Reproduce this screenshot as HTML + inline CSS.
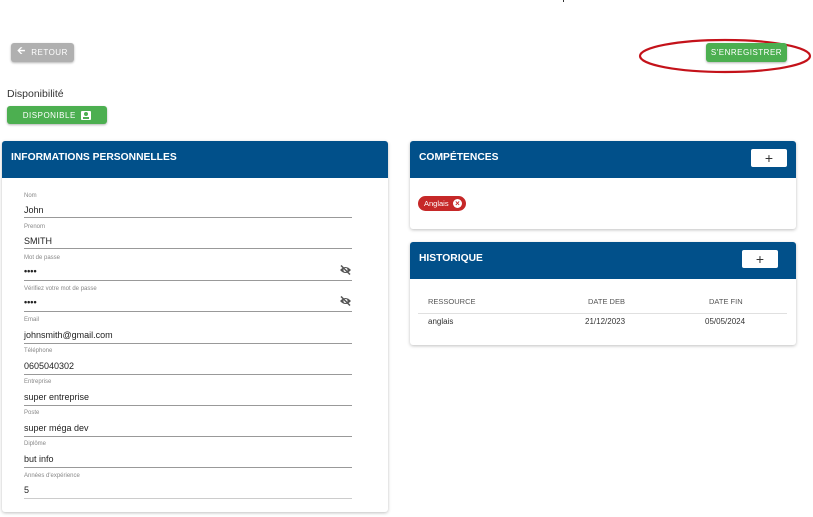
<!DOCTYPE html>
<html><head><meta charset="utf-8"><style>
*{margin:0;padding:0;box-sizing:border-box}
body{width:813px;height:517px;background:#fff;font-family:"Liberation Sans",sans-serif;position:relative;overflow:hidden;color:#222;white-space:nowrap}
.a{position:absolute}
.btn{position:absolute;border-radius:3px;color:#fff;font-size:8px;letter-spacing:.5px;display:flex;align-items:center;justify-content:center;box-shadow:0 1px 2px rgba(0,0,0,.3)}
.card{position:absolute;background:#fff;border-radius:3px;box-shadow:0 1px 3px rgba(0,0,0,.25)}
.hd{position:absolute;left:0;right:0;top:0;height:37px;background:#01508a;border-radius:3px 3px 0 0;color:#fff;font-weight:bold;font-size:10.3px;padding:11px 0 0 9px}
.lbl{position:absolute;left:24px;font-size:6px;color:#888}
.val{position:absolute;left:24px;font-size:9px;color:#222}
.ul{position:absolute;left:24px;width:328px;height:1px;background:#999}
.plus{position:absolute;width:36px;height:18px;background:#fff;border-radius:2px;color:#333;font-size:14px;line-height:18px;text-align:center}
.th{position:absolute;font-size:7.5px;color:#555}
.td{position:absolute;font-size:8px;color:#333}
</style></head><body>
<div class="btn" style="left:11px;top:43px;width:63px;height:19px;background:#b0b0b0"><b style="font-size:10px">&#129128;</b>&nbsp;&nbsp;RETOUR</div>
<svg class="a" style="left:636px;top:36px" width="177" height="42"><ellipse cx="89" cy="20" rx="85" ry="16" fill="none" stroke="#c4121a" stroke-width="2.2"/></svg>
<div class="btn" style="left:706px;top:43px;width:81px;height:19px;background:#4caf50">S'ENREGISTRER</div>
<div class="a" style="left:7px;top:88px;font-size:10.5px;color:#333">Disponibilité</div>
<div class="btn" style="left:7px;top:106px;width:100px;height:18px;background:#4caf50">DISPONIBLE&nbsp;&nbsp;<span style="display:inline-block;width:10px;height:9px;background:#fff;border-radius:1px;position:relative"><span style="position:absolute;left:3px;top:1px;width:4px;height:4px;border-radius:50%;background:#4caf50"></span><span style="position:absolute;left:2px;top:6px;width:6px;height:2px;background:#4caf50"></span></span></div>

<div class="card" style="left:2px;top:141px;width:386px;height:371px">
<div class="hd">INFORMATIONS PERSONNELLES</div>
</div>
<div class="lbl" style="top:193px">Nom</div><div class="val" style="top:205px">John</div><div class="ul" style="top:217px"></div>
<div class="lbl" style="top:224px">Prenom</div><div class="val" style="top:236px">SMITH</div><div class="ul" style="top:248px"></div>
<div class="lbl" style="top:255px">Mot de passe</div><div class="val" style="top:266px;font-weight:bold">••••</div><div class="ul" style="top:280px"></div>
<div class="lbl" style="top:286px">Vérifiez votre mot de passe</div><div class="val" style="top:297px;font-weight:bold">••••</div><div class="ul" style="top:311px"></div>
<div class="lbl" style="top:317px">Email</div><div class="val" style="top:330px">johnsmith@gmail.com</div><div class="ul" style="top:343px"></div>
<div class="lbl" style="top:348px">Téléphone</div><div class="val" style="top:361px">0605040302</div><div class="ul" style="top:374px"></div>
<div class="lbl" style="top:379px">Entreprise</div><div class="val" style="top:392px">super entreprise</div><div class="ul" style="top:405px"></div>
<div class="lbl" style="top:410px">Poste</div><div class="val" style="top:423px">super méga dev</div><div class="ul" style="top:436px"></div>
<div class="lbl" style="top:441px">Diplôme</div><div class="val" style="top:454px">but info</div><div class="ul" style="top:467px"></div>
<div class="lbl" style="top:473px">Années d'expérience</div><div class="val" style="top:485px">5</div><div class="ul" style="top:498px;background:#ccc"></div>
<svg class="a" style="left:339px;top:265px" width="13" height="10" viewBox="0 0 13 10"><path d="M1 5Q6.5-1 12 5Q6.5 11 1 5Z" fill="#555"/><circle cx="6.5" cy="5" r="2" fill="#fff"/><line x1="2" y1="0.5" x2="11" y2="9.5" stroke="#555" stroke-width="1.5"/></svg>
<svg class="a" style="left:339px;top:296px" width="13" height="10" viewBox="0 0 13 10"><path d="M1 5Q6.5-1 12 5Q6.5 11 1 5Z" fill="#555"/><circle cx="6.5" cy="5" r="2" fill="#fff"/><line x1="2" y1="0.5" x2="11" y2="9.5" stroke="#555" stroke-width="1.5"/></svg>

<div class="card" style="left:410px;top:141px;width:386px;height:88px">
<div class="hd">COMPÉTENCES</div>
<div class="plus" style="left:341px;top:8px">+</div>
<div class="a" style="left:8px;top:55px;height:15px;width:48px;background:#c62828;border-radius:8px;color:#fff;font-size:7.5px;line-height:15px;padding-left:6px">Anglais<span style="position:absolute;right:4px;top:3px;width:9px;height:9px;border-radius:50%;background:#fff;color:#c62828;font-size:8px;font-weight:bold;line-height:9px;text-align:center">×</span></div>
</div>

<div class="card" style="left:410px;top:242px;width:386px;height:103px">
<div class="hd">HISTORIQUE</div>
<div class="plus" style="left:332px;top:8px">+</div>
<div class="th" style="left:18px;top:55px">RESSOURCE</div>
<div class="th" style="left:178px;top:55px">DATE DEB</div>
<div class="th" style="left:299px;top:55px">DATE FIN</div>
<div class="a" style="left:8px;top:71px;width:369px;height:1px;background:#e0e0e0"></div>
<div class="td" style="left:18px;top:75px">anglais</div>
<div class="td" style="left:175px;top:75px">21/12/2023</div>
<div class="td" style="left:295px;top:75px">05/05/2024</div>
</div>
<div class="a" style="left:563px;top:0;width:1px;height:2px;background:#333"></div>
</body></html>
